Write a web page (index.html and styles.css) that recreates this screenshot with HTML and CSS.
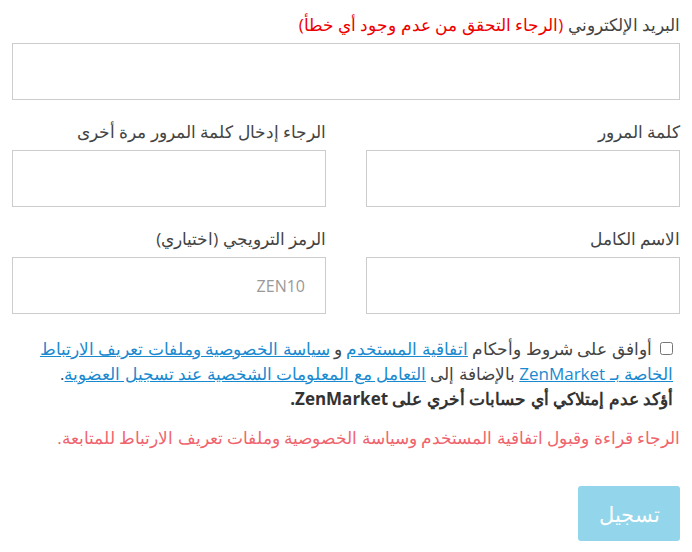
FILE: index.html
```html
<!DOCTYPE html>
<html lang="ar" dir="rtl">
<head>
    <meta charset="UTF-8">
    <meta name="viewport" content="width=device-width, initial-scale=1.0">
    <link rel="stylesheet" href="styles.css">
    <title>تسجيل</title>
</head>
<body>
    <form class="form">
        <div class="field">
            <label class="label">البريد الإلكتروني <span class="warn">(الرجاء التحقق من عدم وجود أي خطأ)</span></label>
            <input type="email" class="input">
        </div>

        <div class="row">
            <div class="field">
                <label class="label">كلمة المرور</label>
                <input type="password" class="input">
            </div>
            <div class="field">
                <label class="label">الرجاء إدخال كلمة المرور مرة أخرى</label>
                <input type="password" class="input">
            </div>
        </div>

        <div class="row">
            <div class="field">
                <label class="label">الاسم الكامل</label>
                <input type="text" class="input">
            </div>
            <div class="field">
                <label class="label">الرمز الترويجي (اختياري)</label>
                <input type="text" class="input" placeholder="ZEN10">
            </div>
        </div>

        <div class="terms">
            <label>
                <input type="checkbox" class="check">
                أوافق على شروط وأحكام <a href="#">اتفاقية المستخدم</a> و <a href="#">سياسة الخصوصية وملفات تعريف الارتباط الخاصة بـ </a><a href="#">ZenMarket</a> بالإضافة إلى <a href="#">التعامل مع المعلومات الشخصية عند تسجيل العضوية</a>.
                <br>
                <b>أؤكد عدم إمتلاكي أي حسابات أخري على ZenMarket.</b>
            </label>
        </div>

        <p class="error">الرجاء قراءة وقبول اتفاقية المستخدم وسياسة الخصوصية وملفات تعريف الارتباط للمتابعة.</p>

        <div class="actions">
            <button type="button" class="btn">تسجيل</button>
        </div>
    </form>
</body>
</html>
```

FILE: styles.css
```css
body {
    font-family: 'Open Sans', 'Noto Sans', sans-serif;
    margin: 0;
    padding: 0;
    background-color: #fff;
    color: #333;
}

.form {
    padding: 13px 12px 0 12px;
}

.row {
    display: grid;
    grid-template-columns: 1fr 1fr;
    column-gap: 40px;
}

.field {
    margin-bottom: 20px;
}

.label {
    display: block;
    font-size: 17px;
    line-height: 24px;
    color: #444;
    margin-bottom: 6px;
}

.warn {
    color: #e00;
}

.input {
    box-sizing: border-box;
    display: block;
    width: 100%;
    height: 57px;
    border: 1px solid #ccc;
    padding: 0 20px;
    font-family: inherit;
    font-size: 16px;
    color: #555;
    direction: ltr;
    text-align: right;
}

.input::placeholder {
    color: #999;
}

.terms {
    font-size: 17px;
    line-height: 25px;
    color: #444;
    margin-top: 2px;
    padding-right: 7px;
}

.terms a {
    color: #1a8ad0;
}

.terms b {
    color: #333;
}

.check {
    margin: 0 0 0 4px;
    width: 13px;
    height: 13px;
}

.error {
    color: #f0646e;
    font-size: 17px;
    line-height: 24px;
    margin: 15px 0 0 0;
}

.actions {
    display: flex;
    justify-content: flex-start;
    margin-top: 36px;
}

.btn {
    width: 102px;
    height: 55px;
    border: none;
    border-radius: 3px;
    background-color: #93d5ea;
    color: #fff;
    font-family: inherit;
    font-size: 21px;
}
```
